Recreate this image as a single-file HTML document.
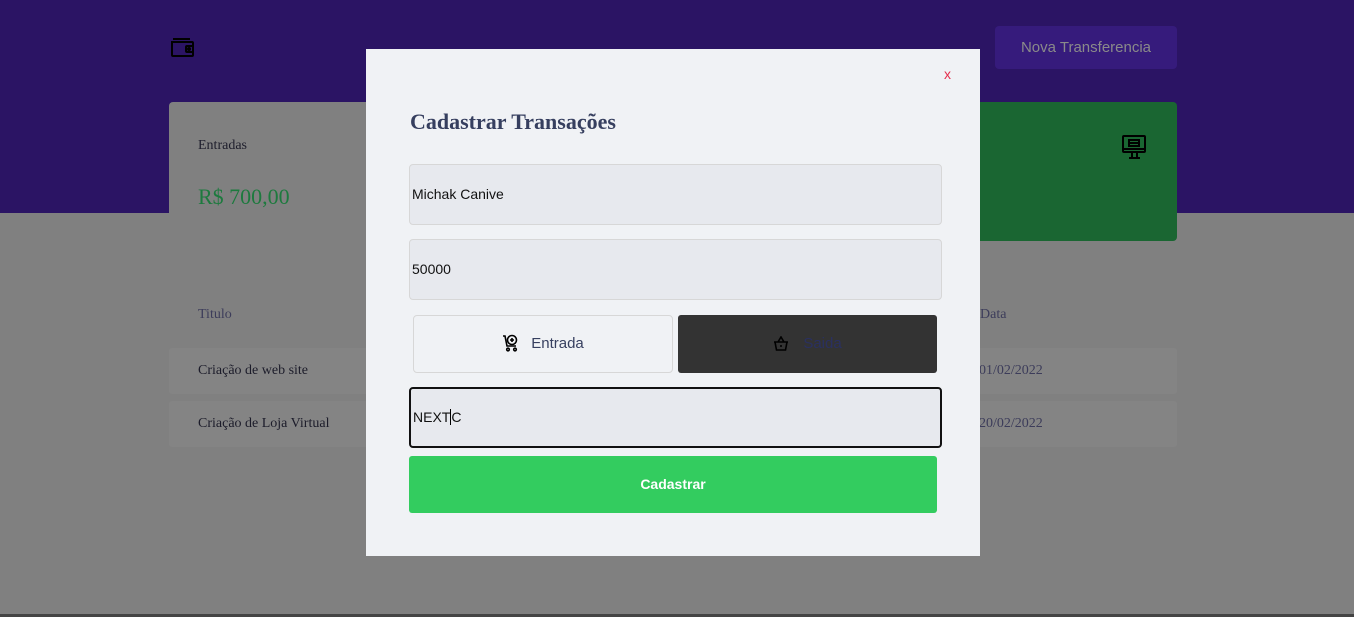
<!DOCTYPE html>
<html><head><meta charset="utf-8"><style>
*{box-sizing:border-box;margin:0;padding:0}
body{width:1354px;height:617px;background:#808080;position:relative;overflow:hidden;font-family:"Liberation Serif",serif}
.hdr{position:absolute;left:0;top:0;width:1354px;height:213px;background:#2b1464}
.btn{position:absolute;left:995px;top:26px;width:182px;height:43px;background:#361b7c;border-radius:4px;color:#8a8a8a;font:15px "Liberation Sans",sans-serif;text-align:center;line-height:43px}
.card{position:absolute;top:102px;height:139px;border-radius:4px}
.abs{position:absolute}
.row{position:absolute;left:169px;width:1008px;height:46px;background:#848484;border-radius:3px;color:#1c1c2a;font-size:14px}
.modal{position:absolute;left:366px;top:49px;width:614px;height:507px;background:#f0f2f5}
.inp{position:absolute;left:43px;width:533px;height:61px;background:#e7e9ee;border:1px solid #d7d7d7;border-radius:4px;font:14px "Liberation Sans",sans-serif;color:#111;padding-left:2px;line-height:59px}
</style></head><body>
<div class="hdr"></div>
<svg class="abs" style="left:170px;top:37px" width="25" height="21" viewBox="0 0 25 21" fill="none" stroke="#000" stroke-width="2"><path d="M3 2h17M2 4v14a1 1 0 0 0 1 1h19a1 1 0 0 0 1-1V6a1 1 0 0 0-1-1H3a1 1 0 0 1-1-1"/><rect x="16" y="9" width="7" height="6" rx="1"/><circle cx="19" cy="12" r="1"/></svg>
<div class="btn">Nova Transferencia</div>
<div class="card" style="left:169px;width:210px;background:#808080"></div>
<div class="abs" style="left:198px;top:138px;font-size:14px;color:#1e1e2c">Entradas</div>
<div class="abs" style="left:198px;top:184px;font-size:22px;color:#1d7a3e">R$ 700,00</div>
<div class="card" style="left:975px;width:202px;background:#1a6632"></div>
<svg class="abs" style="left:1122px;top:135px" width="25" height="25" viewBox="0 0 25 25" fill="none" stroke="#000" stroke-width="2"><rect x="1" y="1" width="22" height="16" rx="1"/><path d="M1 14h22M10 17v5M15 17v5M7 23h11"/><rect x="7" y="5" width="10" height="6"/><path d="M7 8h10"/></svg>
<div class="abs" style="left:198px;top:307px;font-size:14px;color:#3c3c5a">Titulo</div>
<div class="abs" style="left:980px;top:307px;font-size:14px;color:#3c3c5a">Data</div>
<div class="row" style="top:348px"><span class="abs" style="left:29px;top:15px">Criação de web site</span><span class="abs" style="left:810px;top:15px;color:#3c3c5a">01/02/2022</span></div>
<div class="row" style="top:401px"><span class="abs" style="left:29px;top:15px">Criação de Loja Virtual</span><span class="abs" style="left:810px;top:15px;color:#3c3c5a">20/02/2022</span></div>
<div class="abs" style="left:0;top:614px;width:1354px;height:3px;background:#444"></div>
<div class="modal">
<div class="abs" style="left:578px;top:17px;color:#e52e4d;font:14px 'Liberation Sans',sans-serif">x</div>
<div class="abs" style="left:44px;top:60px;font-size:22px;font-weight:bold;color:#363f5f">Cadastrar Transações</div>
<div class="inp" style="top:115px">Michak Canive</div>
<div class="inp" style="top:190px">50000</div>
<div class="abs" style="left:47px;top:266px;width:260px;height:58px;border:1px solid #d7d7d7;border-radius:4px;font:15px 'Liberation Sans',sans-serif;color:#363f5f;text-align:center;line-height:56px">
<svg style="vertical-align:-4px;margin-right:12px" width="17" height="18" viewBox="0 0 17 18" fill="none" stroke="#000" stroke-width="1.6"><path d="M1 2h2l2 10h9"/><circle cx="10" cy="6" r="4.5"/><path d="M10 4v4M8 6h4"/><circle cx="6" cy="15.5" r="1.3"/><circle cx="13" cy="15.5" r="1.3"/></svg>Entrada</div>
<div class="abs" style="left:312px;top:266px;width:259px;height:58px;background:#333;border-radius:3px;font:15px 'Liberation Sans',sans-serif;color:#2a3060;text-align:center;line-height:58px">
<svg style="vertical-align:-3px;margin-right:14px" width="16" height="15" viewBox="0 0 16 15" fill="none" stroke="#000" stroke-width="1.6"><path d="M1 6h14M2 6l1.5 8h9L14 6M5 6l3-5 3 5"/><path d="M7 10h2"/></svg>Saida</div>
<div class="inp" style="top:338px;height:61px;border:2px solid #111;line-height:57px">NEXT<span style="border-left:1px solid #000"></span>C</div>
<div class="abs" style="left:43px;top:407px;width:528px;height:57px;background:#33cc5f;border-radius:3px;color:#fff;font:bold 14px 'Liberation Sans',sans-serif;text-align:center;line-height:57px">Cadastrar</div>
</div>
</body></html>
